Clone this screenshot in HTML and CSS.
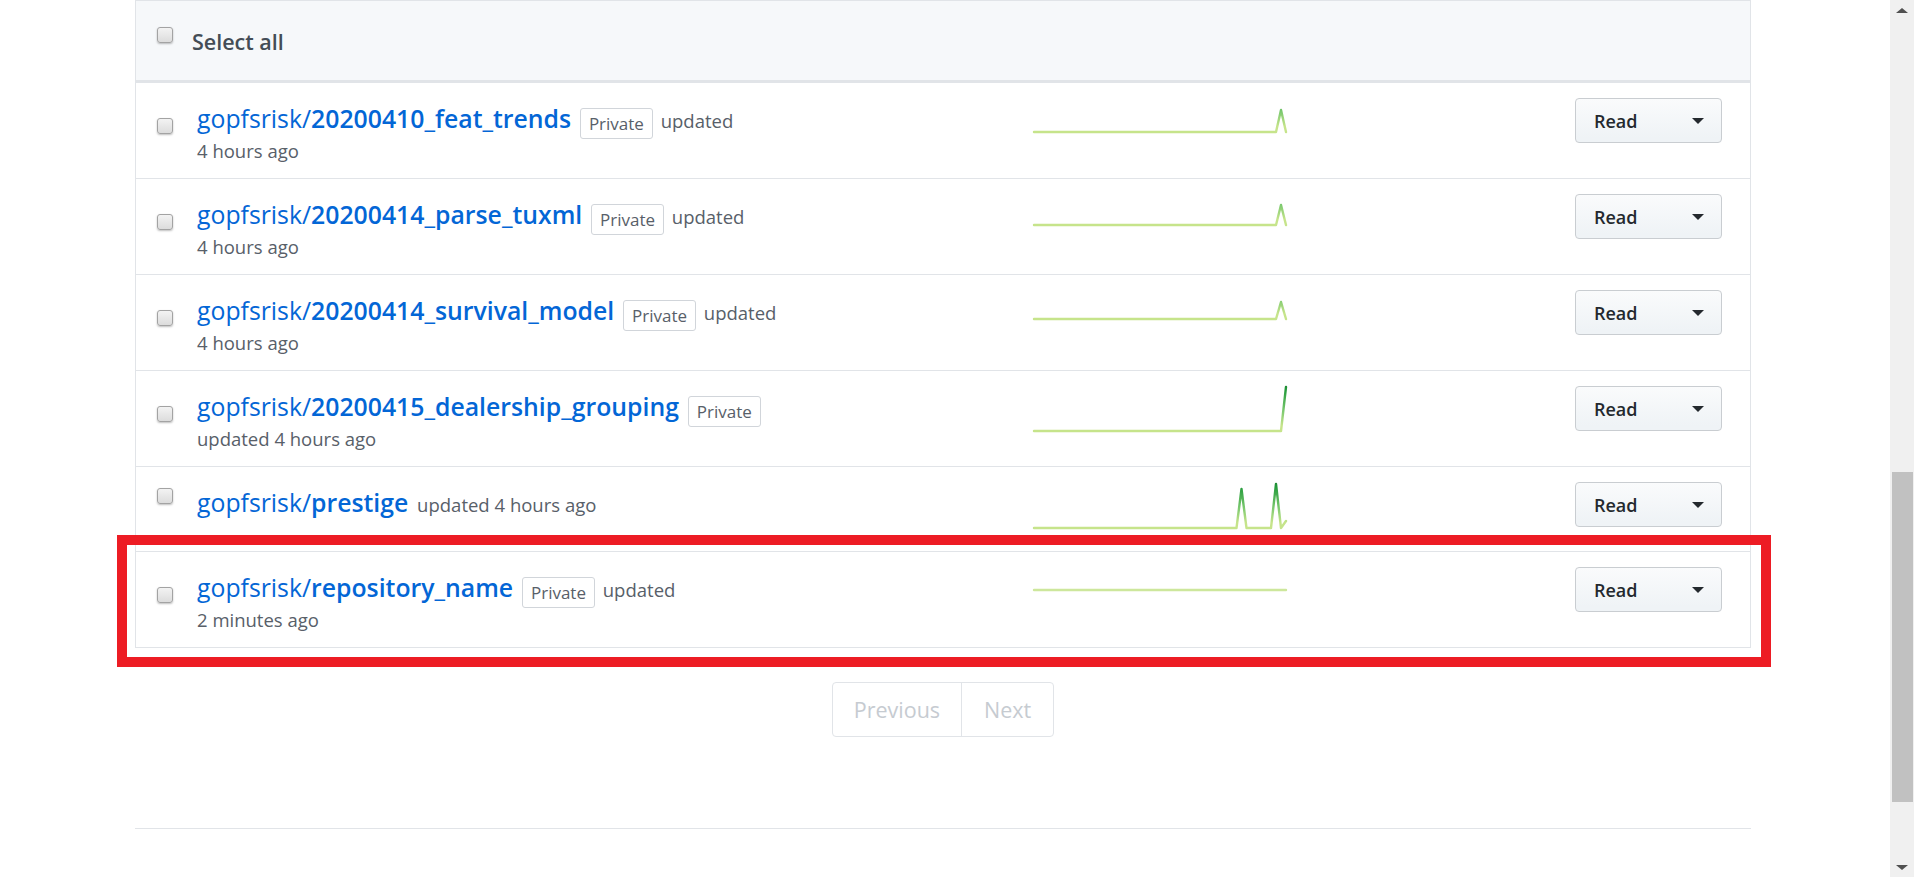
FILE: index.html
```html
<!DOCTYPE html>
<html lang="en">
<head>
<meta charset="utf-8">
<title>Repositories</title>
<link rel="stylesheet" href="styles.css">
</head>
<body>
<div class="page">
  <main class="main">
    <div class="repo-list">
      <div class="list-header">
        <input type="checkbox" class="cb" aria-label="Select all">
        <span class="select-all">Select all</span>
      </div>

      <div class="repo-row">
        <div class="repo-info">
          <input type="checkbox" class="cb">
          <div class="repo-text">
            <a class="repo-name" href="#">gopfsrisk/<strong>20200410_feat_trends</strong></a>
            <span class="badge">Private</span> updated <span class="time">4 hours ago</span>
          </div>
        </div>
        <svg class="spark" width="254" height="65" viewBox="0 0 254 65">
          <defs><linearGradient id="g1" gradientUnits="userSpaceOnUse" x1="0" y1="35" x2="0" y2="-30"><stop offset="10%" stop-color="#c6e48b"/><stop offset="33%" stop-color="#7bc96f"/><stop offset="66%" stop-color="#239a3b"/><stop offset="90%" stop-color="#196127"/></linearGradient></defs>
          <path d="M1 34 L243 34 L248 12 L253 34" stroke="url(#g1)"/>
        </svg>
        <button class="btn" type="button">Read <span class="caret"></span></button>
      </div>

      <div class="repo-row">
        <div class="repo-info">
          <input type="checkbox" class="cb">
          <div class="repo-text">
            <a class="repo-name" href="#">gopfsrisk/<strong>20200414_parse_tuxml</strong></a>
            <span class="badge">Private</span> updated <span class="time">4 hours ago</span>
          </div>
        </div>
        <svg class="spark" width="254" height="65" viewBox="0 0 254 65">
          <defs><linearGradient id="g2" gradientUnits="userSpaceOnUse" x1="0" y1="32" x2="0" y2="-33"><stop offset="10%" stop-color="#c6e48b"/><stop offset="33%" stop-color="#7bc96f"/><stop offset="66%" stop-color="#239a3b"/><stop offset="90%" stop-color="#196127"/></linearGradient></defs>
          <path d="M1 31 L243 31 L248 11 L253 31" stroke="url(#g2)"/>
        </svg>
        <button class="btn" type="button">Read <span class="caret"></span></button>
      </div>

      <div class="repo-row">
        <div class="repo-info">
          <input type="checkbox" class="cb">
          <div class="repo-text">
            <a class="repo-name" href="#">gopfsrisk/<strong>20200414_survival_model</strong></a>
            <span class="badge">Private</span> updated <span class="time">4 hours ago</span>
          </div>
        </div>
        <svg class="spark" width="254" height="65" viewBox="0 0 254 65">
          <defs><linearGradient id="g3" gradientUnits="userSpaceOnUse" x1="0" y1="30" x2="0" y2="-35"><stop offset="10%" stop-color="#c6e48b"/><stop offset="33%" stop-color="#7bc96f"/><stop offset="66%" stop-color="#239a3b"/><stop offset="90%" stop-color="#196127"/></linearGradient></defs>
          <path d="M1 29 L243 29 L248 12 L253 29" stroke="url(#g3)"/>
        </svg>
        <button class="btn" type="button">Read <span class="caret"></span></button>
      </div>

      <div class="repo-row">
        <div class="repo-info">
          <input type="checkbox" class="cb">
          <div class="repo-text">
            <a class="repo-name" href="#">gopfsrisk/<strong>20200415_dealership_grouping</strong></a>
            <span class="badge">Private</span> updated <span class="time">4 hours ago</span>
          </div>
        </div>
        <svg class="spark" width="254" height="65" viewBox="0 0 254 65">
          <defs><linearGradient id="g4" gradientUnits="userSpaceOnUse" x1="0" y1="46" x2="0" y2="-18"><stop offset="10%" stop-color="#c6e48b"/><stop offset="33%" stop-color="#7bc96f"/><stop offset="66%" stop-color="#239a3b"/><stop offset="90%" stop-color="#196127"/></linearGradient></defs>
          <path d="M1 45 L248 45 L253 1" stroke="url(#g4)"/>
        </svg>
        <button class="btn" type="button">Read <span class="caret"></span></button>
      </div>

      <div class="repo-row repo-row--cut">
        <div class="repo-info">
          <input type="checkbox" class="cb">
          <div class="repo-text">
            <a class="repo-name" href="#">gopfsrisk/<strong>prestige</strong></a> updated <span class="time">4 hours ago</span>
          </div>
        </div>
        <svg class="spark" width="254" height="65" viewBox="0 0 254 65">
          <defs><linearGradient id="g5" gradientUnits="userSpaceOnUse" x1="0" y1="47" x2="0" y2="-17"><stop offset="10%" stop-color="#c6e48b"/><stop offset="33%" stop-color="#7bc96f"/><stop offset="66%" stop-color="#239a3b"/><stop offset="90%" stop-color="#196127"/></linearGradient></defs>
          <path d="M1 46 L203.5 46 L208.5 7 L213.5 46 L238 46 L243 2 L248 46 L253 39" stroke="url(#g5)"/>
        </svg>
        <button class="btn" type="button">Read <span class="caret"></span></button>
      </div>

      <div class="repo-row repo-row--marked">
        <div class="repo-info">
          <input type="checkbox" class="cb">
          <div class="repo-text">
            <a class="repo-name" href="#">gopfsrisk/<strong>repository_name</strong></a>
            <span class="badge">Private</span> updated <span class="time">2 minutes ago</span>
          </div>
        </div>
        <svg class="spark" width="254" height="65" viewBox="0 0 254 65">
          <path d="M1 23 L253 23" stroke="#cde79c"/>
        </svg>
        <button class="btn" type="button">Read <span class="caret"></span></button>
        <div class="highlight" aria-hidden="true"></div>
      </div>
    </div>

    <nav class="pagination">
      <div class="pg">
        <span class="pg-item">Previous</span>
        <span class="pg-item">Next</span>
      </div>
    </nav>

    <div class="footer-rule"></div>
  </main>

  <div class="scrollbar" aria-hidden="true">
    <div class="sb-btn"><span class="sb-arrow sb-up"></span></div>
    <div class="sb-track"><div class="sb-thumb"></div></div>
    <div class="sb-btn"><span class="sb-arrow sb-down"></span></div>
  </div>
</div>
</body>
</html>
```

FILE: styles.css
```css
* {
  box-sizing: border-box;
}

html,
body {
  margin: 0;
  height: 100%;
  overflow: hidden;
}

body {
  font-family: "Open Sans", "Noto Sans", sans-serif;
  color: #24292e;
  background: #fff;
}

.page {
  display: flex;
  height: 877px;
}

.main {
  flex: 1;
  min-width: 0;
  padding: 0 139px 0 135px;
}

/* ---------- list ---------- */
.repo-list {
  border: 1px solid #e1e4e8;
}

.list-header {
  display: flex;
  align-items: flex-start;
  gap: 19px;
  height: 81px;
  padding: 26px 21px 0;
  background: #f6f8fa;
  border-bottom: 2px solid #e1e4e8;
}

.select-all {
  font-size: 21.5px;
  line-height: 30px;
  font-weight: 600;
  color: #444d56;
}

.cb {
  appearance: none;
  -webkit-appearance: none;
  flex: none;
  width: 16px;
  height: 16px;
  margin: 0;
  border: 1px solid #a3a3a3;
  border-radius: 3px;
  background: linear-gradient(#f3f3f3, #dcdcdc);
  box-shadow: 0 1px 2px rgba(0, 0, 0, 0.25);
}

.repo-row {
  position: relative;
  display: grid;
  grid-template-columns: 876px 254px 1fr 147px;
  align-items: start;
  padding: 15px 28px 15px 21px;
  border-top: 1px solid #e1e4e8;
}

.repo-row--cut {
  padding-bottom: 4px;
}

.repo-info {
  display: flex;
  align-items: center;
  gap: 24px;
}

.repo-info .cb {
  margin-bottom: 10px;
}

.repo-text {
  width: 592px;
  padding-top: 1px;
  margin-bottom: -2px;
  font-size: 18.5px;
  line-height: 28px;
  color: #586069;
}

.repo-name {
  margin-right: 4px;
  font-size: 24.8px;
  line-height: 38px;
  color: #0366d6;
  text-decoration: none;
}

.repo-name strong {
  font-weight: 600;
}

.badge {
  display: inline-block;
  margin: -2px 3px -2px 0;
  padding: 0 8px;
  font-size: 17px;
  line-height: 29px;
  color: #586069;
  border: 1px solid #d1d5da;
  border-radius: 3px;
  vertical-align: -2px;
}

.time {
  white-space: nowrap;
}

.spark {
  display: block;
  overflow: visible;
}

.spark path {
  fill: none;
  stroke-width: 2.4;
  stroke-linejoin: round;
  stroke-linecap: round;
}

.btn {
  grid-column: 4;
  display: flex;
  align-items: center;
  justify-content: space-between;
  width: 147px;
  height: 45px;
  padding: 0 17px 0 18px;
  font-family: inherit;
  font-size: 18px;
  font-weight: 600;
  color: #24292e;
  background: linear-gradient(-180deg, #fafbfc 0%, #eff3f6 90%);
  border: 1px solid #c9cdd1;
  border-radius: 4px;
}

.caret {
  width: 0;
  height: 0;
  border-left: 6px solid transparent;
  border-right: 6px solid transparent;
  border-top: 6px solid #24292e;
}

.highlight {
  position: absolute;
  top: -17px;
  left: -19px;
  right: -21px;
  bottom: -20px;
  border: 10px solid #ed1c24;
  pointer-events: none;
}

/* ---------- pagination ---------- */
.pagination {
  display: flex;
  justify-content: center;
  margin-top: 34px;
}

.pg {
  display: flex;
  border: 1px solid #e1e4e8;
  border-radius: 4px;
}

.pg-item {
  padding: 12px 21px;
  font-size: 21.5px;
  line-height: 29px;
  color: #c6cbd1;
}

.pg-item + .pg-item {
  border-left: 1px solid #e1e4e8;
  padding: 12px 22px;
}

.footer-rule {
  margin-top: 91px;
  border-top: 1px solid #e1e4e8;
}

/* ---------- scrollbar ---------- */
.scrollbar {
  flex: none;
  width: 24px;
  display: flex;
  flex-direction: column;
  background: #f0f0f0;
}

.sb-btn {
  flex: none;
  height: 17px;
  display: flex;
  align-items: center;
  justify-content: center;
}

.sb-arrow {
  width: 0;
  height: 0;
  border-left: 6px solid transparent;
  border-right: 6px solid transparent;
}

.sb-up {
  border-bottom: 5px solid #505050;
  margin-top: 4px;
}

.sb-down {
  border-top: 5px solid #505050;
  margin-bottom: 2px;
}

.sb-track {
  flex: 1;
  padding: 0 1px 0 2px;
}

.sb-thumb {
  margin-top: 455px;
  height: 330px;
  background: #c1c1c1;
}
```
